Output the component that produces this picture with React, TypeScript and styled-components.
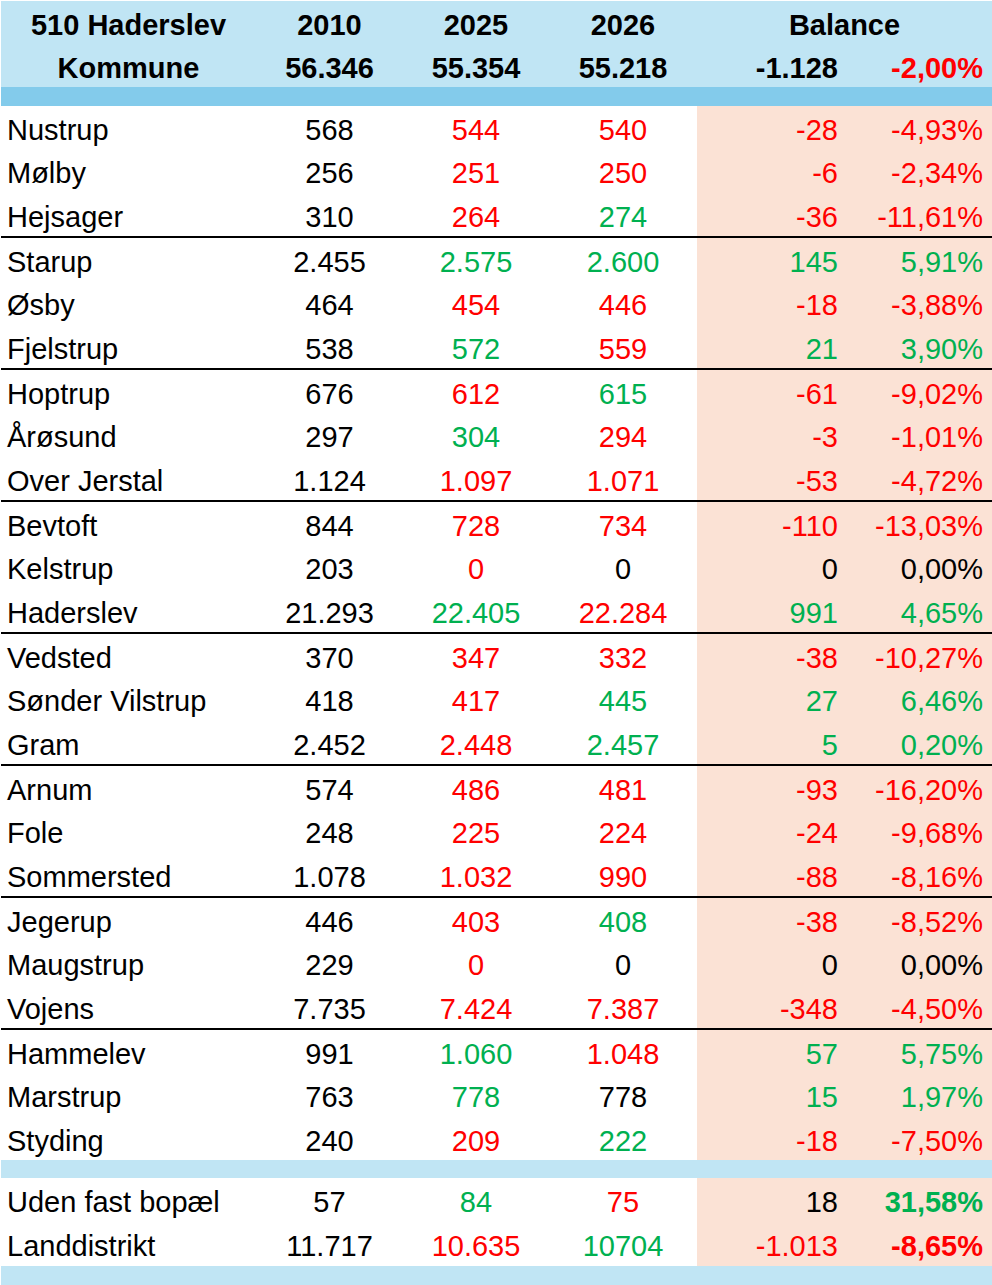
import React, { FC } from "react";
import styled, { createGlobalStyle, css } from "styled-components";

type Tone = "r" | "g" | "k";

interface Line {
  name: string;
  y2010: string;
  y2025: [string, Tone];
  y2026: [string, Tone];
  diff: [string, Tone];
  pct: [string, Tone];
}

const L = (
  name: string,
  y2010: string,
  a: string,
  at: Tone,
  b: string,
  bt: Tone,
  d: string,
  dt: Tone,
  p: string,
  pt: Tone
): Line => ({ name, y2010, y2025: [a, at], y2026: [b, bt], diff: [d, dt], pct: [p, pt] });

const groups: Line[][] = [
  [
    L("Nustrup", "568", "544", "r", "540", "r", "-28", "r", "-4,93%", "r"),
    L("Mølby", "256", "251", "r", "250", "r", "-6", "r", "-2,34%", "r"),
    L("Hejsager", "310", "264", "r", "274", "g", "-36", "r", "-11,61%", "r"),
  ],
  [
    L("Starup", "2.455", "2.575", "g", "2.600", "g", "145", "g", "5,91%", "g"),
    L("Øsby", "464", "454", "r", "446", "r", "-18", "r", "-3,88%", "r"),
    L("Fjelstrup", "538", "572", "g", "559", "r", "21", "g", "3,90%", "g"),
  ],
  [
    L("Hoptrup", "676", "612", "r", "615", "g", "-61", "r", "-9,02%", "r"),
    L("Årøsund", "297", "304", "g", "294", "r", "-3", "r", "-1,01%", "r"),
    L("Over Jerstal", "1.124", "1.097", "r", "1.071", "r", "-53", "r", "-4,72%", "r"),
  ],
  [
    L("Bevtoft", "844", "728", "r", "734", "r", "-110", "r", "-13,03%", "r"),
    L("Kelstrup", "203", "0", "r", "0", "k", "0", "k", "0,00%", "k"),
    L("Haderslev", "21.293", "22.405", "g", "22.284", "r", "991", "g", "4,65%", "g"),
  ],
  [
    L("Vedsted", "370", "347", "r", "332", "r", "-38", "r", "-10,27%", "r"),
    L("Sønder Vilstrup", "418", "417", "r", "445", "g", "27", "g", "6,46%", "g"),
    L("Gram", "2.452", "2.448", "r", "2.457", "g", "5", "g", "0,20%", "g"),
  ],
  [
    L("Arnum", "574", "486", "r", "481", "r", "-93", "r", "-16,20%", "r"),
    L("Fole", "248", "225", "r", "224", "r", "-24", "r", "-9,68%", "r"),
    L("Sommersted", "1.078", "1.032", "r", "990", "r", "-88", "r", "-8,16%", "r"),
  ],
  [
    L("Jegerup", "446", "403", "r", "408", "g", "-38", "r", "-8,52%", "r"),
    L("Maugstrup", "229", "0", "r", "0", "k", "0", "k", "0,00%", "k"),
    L("Vojens", "7.735", "7.424", "r", "7.387", "r", "-348", "r", "-4,50%", "r"),
  ],
  [
    L("Hammelev", "991", "1.060", "g", "1.048", "r", "57", "g", "5,75%", "g"),
    L("Marstrup", "763", "778", "g", "778", "k", "15", "g", "1,97%", "g"),
    L("Styding", "240", "209", "r", "222", "g", "-18", "r", "-7,50%", "r"),
  ],
];

const totals: Line[] = [
  L("Uden fast bopæl", "57", "84", "g", "75", "r", "18", "k", "31,58%", "g"),
  L("Landdistrikt", "11.717", "10.635", "r", "10704", "g", "-1.013", "r", "-8,65%", "r"),
];

const colors: Record<Tone, string> = { r: "#ff0000", g: "#00b050", k: "#000000" };
const lightBlue = "#c0e5f4";
const darkBlue = "#83cbeb";
const pink = "#fbe2d5";

const GlobalStyle = createGlobalStyle`
  body {
    margin: 0;
    background: #ffffff;
    font-family: "Liberation Sans", Arial, sans-serif;
  }
`;

const Sheet = styled.div`
  width: 991px;
  margin: 1px 0 0 1px;
  font-size: 29px;
  color: #000;
`;

const Row = styled.div<{ $h: number }>`
  display: grid;
  grid-template-columns: 255px 147px 146px 148px 144px 151px;
  height: ${(p) => p.$h}px;
`;

const Head = styled.div`
  background: ${lightBlue};
  font-weight: 700;
`;

const Cell = styled.div<{
  $align?: "left" | "center" | "right";
  $tone?: Tone;
  $pink?: boolean;
  $bold?: boolean;
  $span?: number;
}>`
  display: flex;
  align-items: center;
  padding-top: 6px;
  white-space: nowrap;
  color: ${(p) => colors[p.$tone || "k"]};
  font-weight: ${(p) => (p.$bold ? 700 : "inherit")};
  background: ${(p) => (p.$pink ? pink : "transparent")};
  ${(p) => p.$span && css`grid-column: span ${p.$span};`}
  ${(p) =>
    p.$align === "left"
      ? css`justify-content: flex-start; padding-left: 6px;`
      : p.$align === "right"
      ? css`justify-content: flex-end;`
      : css`justify-content: center;`}
`;

const DiffCell = styled(Cell)`
  padding-right: 3px;
`;

const PctCell = styled(Cell)`
  padding-right: 9px;
`;

const Band = styled.div<{ $dark?: boolean; $h: number }>`
  height: ${(p) => p.$h}px;
  background: ${(p) => (p.$dark ? darkBlue : lightBlue)};
`;

const Group = styled.div<{ $rule: boolean }>`
  border-bottom: ${(p) => (p.$rule ? "2px solid #000" : "none")};
`;

const DataRow: FC<{ line: Line; h: number; bold?: boolean }> = ({ line, h, bold }) => (
  <Row $h={h}>
    <Cell $align="left">{line.name}</Cell>
    <Cell>{line.y2010}</Cell>
    <Cell $tone={line.y2025[1]}>{line.y2025[0]}</Cell>
    <Cell $tone={line.y2026[1]}>{line.y2026[0]}</Cell>
    <DiffCell $align="right" $pink $tone={line.diff[1]}>
      {line.diff[0]}
    </DiffCell>
    <PctCell $align="right" $pink $bold={bold} $tone={line.pct[1]}>
      {line.pct[0]}
    </PctCell>
  </Row>
);

const App: FC = () => (
  <>
    <GlobalStyle />
    <Sheet>
      <Head>
        <Row $h={43}>
          <Cell>510 Haderslev</Cell>
          <Cell>2010</Cell>
          <Cell>2025</Cell>
          <Cell>2026</Cell>
          <Cell $span={2}>Balance</Cell>
        </Row>
        <Row $h={43}>
          <Cell>Kommune</Cell>
          <Cell>56.346</Cell>
          <Cell>55.354</Cell>
          <Cell>55.218</Cell>
          <DiffCell $align="right">-1.128</DiffCell>
          <PctCell $align="right" $tone="r">
            -2,00%
          </PctCell>
        </Row>
      </Head>
      <Band $dark $h={19} />
      {groups.map((g, i) => (
        <Group key={i} $rule={i < groups.length - 1}>
          {g.map((line) => (
            <DataRow key={line.name} line={line} h={130 / 3} />
          ))}
        </Group>
      ))}
      <Band $h={18} />
      {totals.map((line) => (
        <DataRow key={line.name} line={line} h={44} bold />
      ))}
      <Band $h={20} />
    </Sheet>
  </>
);

export default App;
